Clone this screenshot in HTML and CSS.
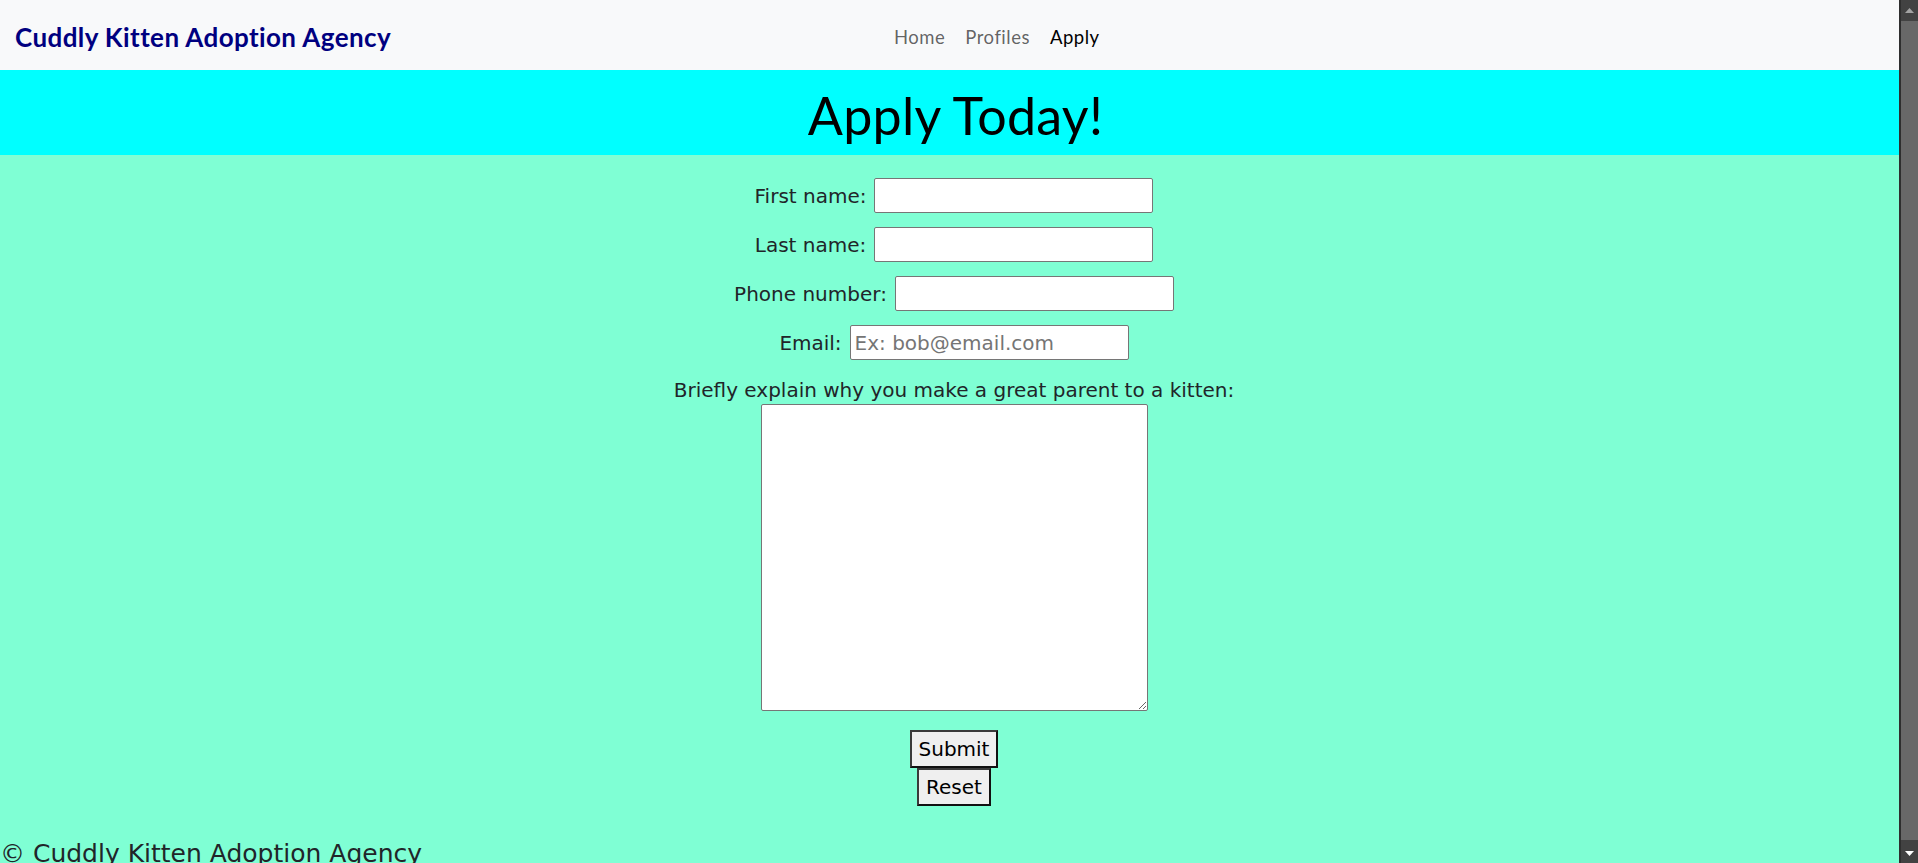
FILE: index.html
```html
<!DOCTYPE html>
<html lang="en">
<head>
<meta charset="utf-8">
<title>Apply - Cuddly Kitten Adoption Agency</title>
<link rel="stylesheet" href="styles.css">
</head>
<body>
<div class="page">
  <nav class="navbar">
    <a class="brand" href="#">Cuddly Kitten Adoption Agency</a>
    <ul class="nav-links">
      <li><a class="nav-link" href="#">Home</a></li>
      <li><a class="nav-link" href="#">Profiles</a></li>
      <li><a class="nav-link active" href="#">Apply</a></li>
    </ul>
  </nav>
  <header class="banner">
    <h1 class="banner-title">Apply Today!</h1>
  </header>
  <main class="content">
    <form class="apply-form">
      <div class="form-row">
        <label class="form-label" for="first">First name:</label>
        <input class="form-input" type="text" id="first">
      </div>
      <div class="form-row">
        <label class="form-label" for="last">Last name:</label>
        <input class="form-input" type="text" id="last">
      </div>
      <div class="form-row">
        <label class="form-label" for="phone">Phone number:</label>
        <input class="form-input" type="tel" id="phone">
      </div>
      <div class="form-row">
        <label class="form-label" for="email">Email:</label>
        <input class="form-input" type="email" id="email" placeholder="Ex: bob@email.com">
      </div>
      <label class="form-label explain-label" for="why">Briefly explain why you make a great parent to a kitten:</label>
      <textarea class="form-textarea" id="why"></textarea>
      <div class="buttons">
        <button class="form-button" type="submit">Submit</button>
        <button class="form-button" type="reset">Reset</button>
      </div>
    </form>
  </main>
  <footer class="footer">© Cuddly Kitten Adoption Agency</footer>
</div>
<div class="scrollbar" aria-hidden="true">
  <div class="scroll-btn">
    <svg width="9" height="5" viewBox="0 0 9 5"><polygon points="0,5 4.5,0 9,5" fill="#a3a3a3"/></svg>
  </div>
  <div class="scroll-thumb"></div>
  <div class="scroll-btn">
    <svg width="9" height="5" viewBox="0 0 9 5"><polygon points="0,0 4.5,5 9,0" fill="#ffffff"/></svg>
  </div>
</div>
</body>
</html>
```
FILE: styles.css
```css
html {
  background: #7fffd4;
}
body {
  margin: 0;
  background: #7fffd4;
  font-family: "DejaVu Sans", Verdana, sans-serif;
  color: #212529;
}
.page {
  margin-right: 19px;
}

.scrollbar {
  position: fixed;
  top: 0;
  right: 0;
  width: 17px;
  height: 100vh;
  display: flex;
  flex-direction: column;
  background: #424242;
  border-left: 2px solid #2e2e2e;
}
.scroll-btn {
  height: 20px;
  display: flex;
  align-items: center;
  justify-content: center;
  flex: 0 0 auto;
}
.scroll-thumb {
  flex: 1;
  background: #686868;
  margin: 1px 0 3px 0;
}

.navbar {
  box-sizing: border-box;
  display: grid;
  grid-template-columns: 880px auto;
  align-items: center;
  height: 70px;
  padding-top: 3px;
  background: #f8f9fa;
}
.brand {
  padding-left: 15px;
  font-family: Lato, "DejaVu Sans", sans-serif;
  font-weight: 700;
  font-size: 26px;
  color: #000080;
  text-decoration: none;
  letter-spacing: 0.4px;
}
.nav-links {
  display: flex;
  gap: 20px;
  list-style: none;
  margin: 0;
  padding: 0 0 0 14px;
}
.nav-link {
  font-family: Lato, "DejaVu Sans", sans-serif;
  font-size: 18.5px;
  color: rgba(0, 0, 0, 0.62);
  text-decoration: none;
  letter-spacing: 0.5px;
}
.nav-link.active {
  color: #000;
}

.banner {
  box-sizing: border-box;
  background: #00ffff;
  height: 85px;
  display: flex;
  align-items: center;
  justify-content: center;
  padding: 4px 0 0 12px;
}
.banner-title {
  margin: 0;
  font-family: Lato, "DejaVu Sans", sans-serif;
  font-weight: 400;
  font-size: 52px;
  color: #000;
  letter-spacing: 0.3px;
}

.content {
  padding: 23px 0 0 9px;
}
.apply-form {
  display: flex;
  flex-direction: column;
  align-items: center;
}
.form-row {
  display: flex;
  align-items: baseline;
  justify-content: center;
  gap: 8px;
  margin-bottom: 14px;
}
.form-row:nth-child(4) {
  margin-bottom: 0;
}
.form-label {
  font-size: 20px;
  color: #212529;
}
.form-input {
  box-sizing: border-box;
  width: 279px;
  height: 35px;
  padding: 5px 4px;
  border: 1px solid #767676;
  border-radius: 2px;
  background: #fff;
  font-family: "DejaVu Sans", Verdana, sans-serif;
  font-size: 20px;
  color: #000;
}
.form-input::placeholder {
  color: #757575;
}
.explain-label {
  margin-top: 18px;
}
.form-textarea {
  box-sizing: border-box;
  width: 387px;
  height: 307px;
  margin-top: 2px;
  border: 1px solid #767676;
  border-radius: 2px;
  background: #fff;
  font-family: "DejaVu Sans", Verdana, sans-serif;
  font-size: 20px;
}
.buttons {
  display: flex;
  flex-direction: column;
  align-items: center;
  margin-top: 19px;
}
.form-button {
  padding: 5px 7px;
  border: 2px solid;
  border-color: #3a3a3a #111 #111 #3a3a3a;
  border-radius: 0;
  background: #efefef;
  font-family: "DejaVu Sans", Verdana, sans-serif;
  font-size: 20px;
  line-height: normal;
  color: #000;
}

.footer {
  margin-top: 33px;
  font-size: 25px;
  color: #212529;
}
```
